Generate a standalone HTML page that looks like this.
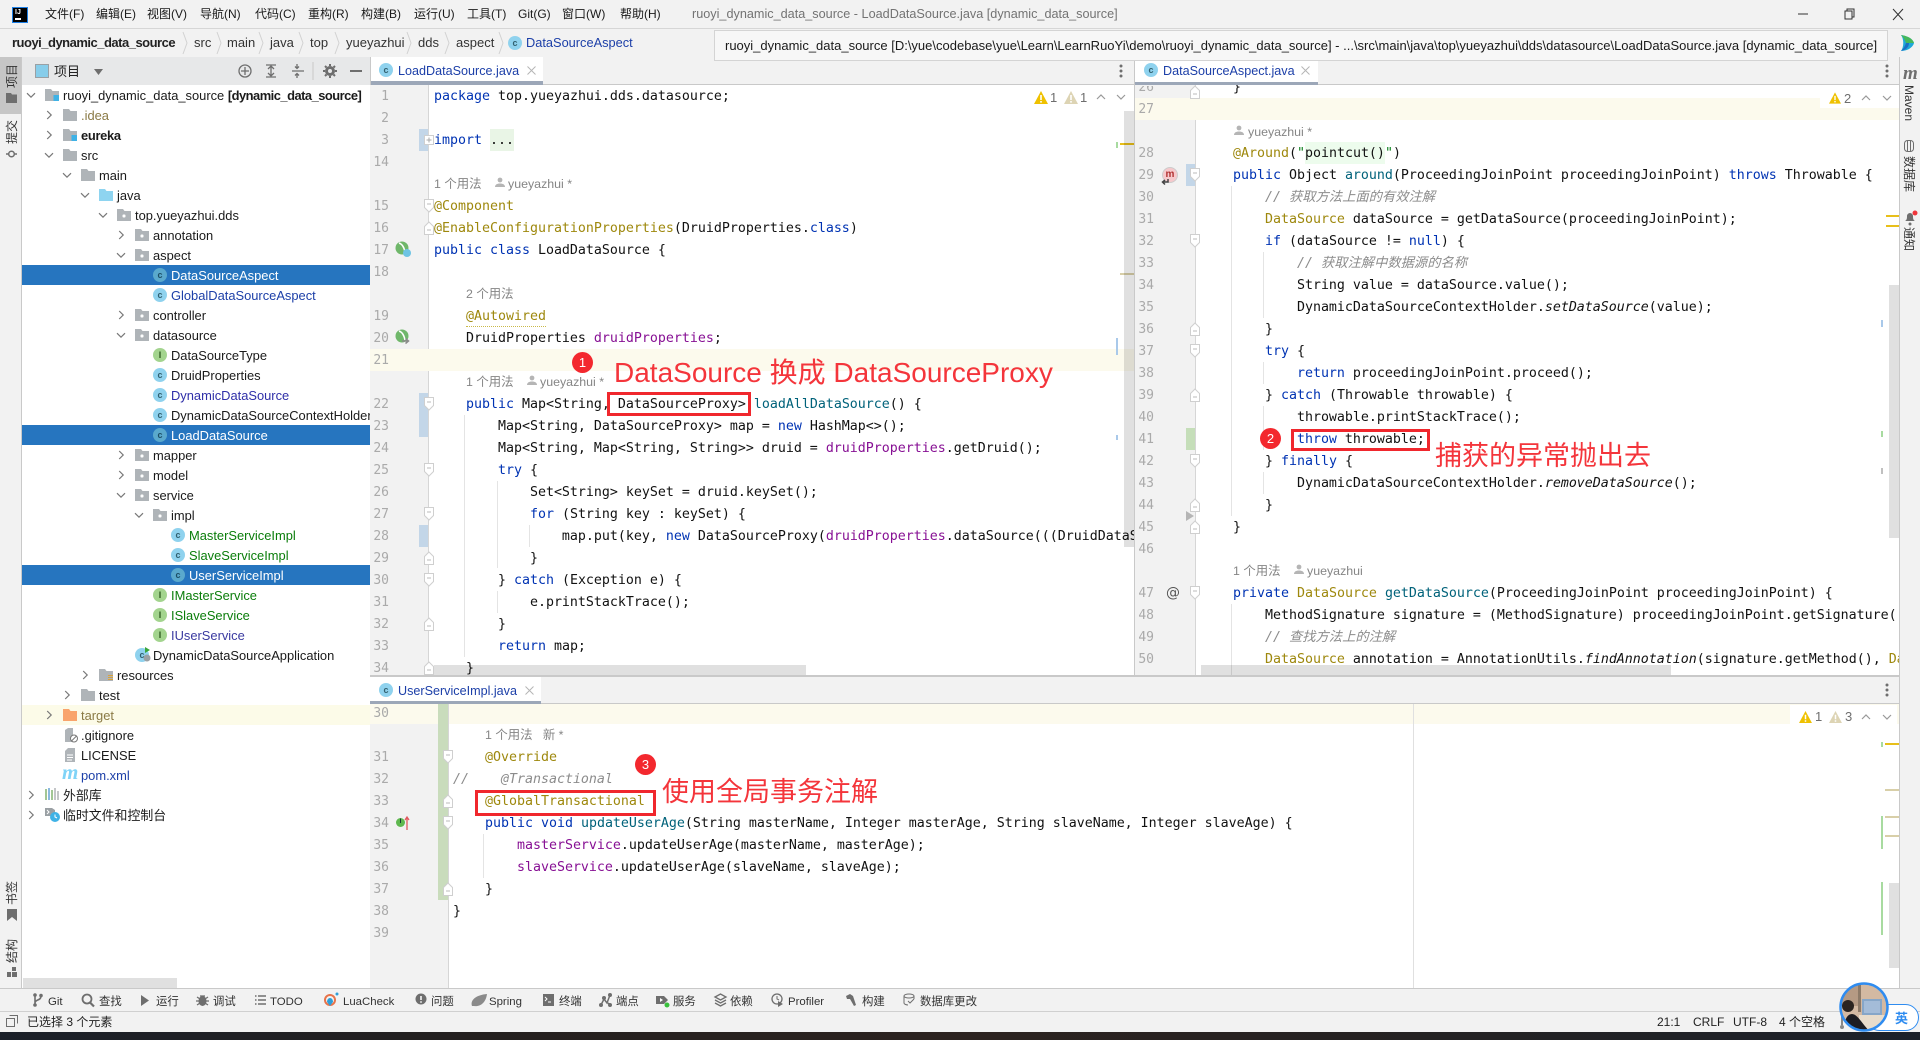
<!DOCTYPE html>
<html lang="zh"><head><meta charset="utf-8"><title>ruoyi_dynamic_data_source</title>
<style>
html,body{margin:0;padding:0}
body{width:1920px;height:1040px;overflow:hidden;background:#f2f2f2;position:relative;font-family:"Liberation Sans","Noto Sans CJK SC",sans-serif;color:#1a1a1a}
.a,.t,.ci,.ii,svg.s,.h,.bx,.l,.rc{position:absolute}
.a,.t,.h{white-space:nowrap}
.b{position:absolute}
.t{font-size:12.9px;line-height:20px;margin-top:1px}
.w{color:#fff}
.ci,.ii{width:14px;height:14px;border-radius:50%;background:#8fd2ee;color:#31606f;font:bold 9px/14px "Liberation Sans",sans-serif;text-align:center}
.ii{background:#a3d48e;color:#2d5a1e}
.sl{background:#5aa9cd;color:#1d4f66}
.m{font-size:12px;line-height:20px;top:4px}
.n{font-size:13px;line-height:20px;top:33px;color:#333}
.tb{font-size:12.6px;line-height:20px;color:#1c3fa8;margin-top:1px}
.bt{font-size:11.4px;line-height:16px;top:993.5px;color:#333}
.st{font-size:12px;line-height:16px;top:1014px;color:#222}
.ed{position:absolute;left:0;top:0;width:1920px;height:1040px;overflow:hidden}
.ed p{position:absolute;margin:1px 0 0;white-space:pre;font:13.29px/22px "DejaVu Sans Mono","Liberation Mono","Noto Sans CJK SC",monospace;height:22px;color:#111}
.ed1 p{left:434px}.ed2 p{left:1201px}.ed3 p{left:453px}
i{font-style:normal}
.k{color:#0033b3}.an{color:#9e880d}.f{color:#871094}.mt{color:#00627a}.str{color:#067d17}
.c{color:#8c8c8c;font-style:italic}.it{font-style:italic}
.l{font:13px/22px "DejaVu Sans Mono","Liberation Mono",monospace;color:#aaa;width:19px;text-align:right;margin-top:1px}
.n1 .l{left:370px}.n2 .l{left:1135px}.n3 .l{left:370px}
.h{font-size:12.4px;line-height:22px;color:#858585}
.gd{position:absolute;width:1px;background:#e4e4e4}
.bx{border:3px solid #f0272d;box-sizing:border-box}
.rc{width:21px;height:21px;border-radius:50%;background:#f3282e;color:#fff;font:13px/21px "Liberation Sans",sans-serif;text-align:center}
.ann{position:absolute;white-space:nowrap;color:#f4353b;font-family:"Liberation Sans","Noto Sans CJK SC",sans-serif}
.v{position:absolute;white-space:nowrap;writing-mode:vertical-rl;text-orientation:sideways;font-size:12px;line-height:14px;color:#333}
.vl{transform:rotate(180deg)}
svg.s{overflow:visible}
.fd{width:10px;height:14px}
.ar{width:10px;height:10px}
.fl{width:14px;height:12px}
.sb{position:absolute;background:rgba(0,0,0,.12)}
.wn{position:absolute;font-size:13px;line-height:16px;color:#6e6e6e}
.bd{font-weight:bold;letter-spacing:-.5px}
</style></head><body>
<svg width="0" height="0" style="position:absolute">
<symbol id="cr" viewBox="0 0 10 10"><path d="M3.2 1l4 4-4 4" fill="none" stroke="#777" stroke-width="1.2"/></symbol>
<symbol id="cd" viewBox="0 0 10 10"><path d="M1 3.2l4 4 4-4" fill="none" stroke="#777" stroke-width="1.2"/></symbol>
<symbol id="fo" viewBox="0 0 14 12"><path d="M0 0h6l1.5 2H14v10H0z" fill="#afb4b8"/></symbol>
<symbol id="pk" viewBox="0 0 14 12"><path d="M0 0h6l1.5 2H14v10H0z" fill="#afb4b8"/><rect x="5.5" y="5.5" width="3" height="3" rx="1" fill="#fff"/></symbol>
<symbol id="fb" viewBox="0 0 14 12"><path d="M0 0h6l1.5 2H14v10H0z" fill="#8ed4f0"/></symbol>
<symbol id="ft" viewBox="0 0 14 12"><path d="M0 0h6l1.5 2H14v10H0z" fill="#f9a46c"/></symbol>
<symbol id="mo" viewBox="0 0 14 12"><path d="M0 0h6l1.5 2H14v10H0z" fill="#afb4b8"/><rect x="8.5" y="6" width="6" height="6.5" fill="#3fb2e6"/></symbol>
<symbol id="rs" viewBox="0 0 14 12"><path d="M0 0h6l1.5 2H14v10H0z" fill="#afb4b8"/><path d="M9 6.5h6M9 8.5h6M9 10.5h6M9 12.5h6" stroke="#d9a33c" stroke-width="1.1"/></symbol>
<symbol id="fdo" viewBox="0 0 10 14"><path d="M.5.5h9v8L5 13 .5 8.500z" fill="#fff" stroke="#cfcfcf"/><path d="M3 5h4" stroke="#bbb"/></symbol>
<symbol id="fde" viewBox="0 0 10 14"><path d="M.5 13.500h9v-8L5 1 .5 5.500z" fill="#fff" stroke="#cfcfcf"/><path d="M3 9h4" stroke="#bbb"/></symbol>
<symbol id="pn" viewBox="0 0 10 12"><circle cx="5" cy="3" r="2.400" fill="#b5b5b5"/><path d="M0 10c0-3 3-3.500 5-3.500s5 .5 5 3.500z" fill="#b5b5b5"/></symbol>
<symbol id="wa" viewBox="0 0 14 13"><path d="M7 0l7 13H0z" fill="#efc100"/><path d="M6.200 4h1.600v5H6.200zM6.200 10h1.600v1.600H6.200z" fill="#fff"/></symbol>
<symbol id="wb" viewBox="0 0 14 13"><path d="M7 0l7 13H0z" fill="#ddd4b4"/><path d="M6.200 4h1.600v5H6.200zM6.200 10h1.600v1.600H6.200z" fill="#fff"/></symbol>
<symbol id="up" viewBox="0 0 10 6"><path d="M1 5l4-4 4 4" fill="none" stroke="#999" stroke-width="1.200"/></symbol>
<symbol id="dn" viewBox="0 0 10 6"><path d="M1 1l4 4 4-4" fill="none" stroke="#999" stroke-width="1.200"/></symbol>
<symbol id="kb" viewBox="0 0 4 14"><circle cx="2" cy="2" r="1.500" fill="#6e6e6e"/><circle cx="2" cy="7" r="1.500" fill="#6e6e6e"/><circle cx="2" cy="12" r="1.500" fill="#6e6e6e"/></symbol>
<symbol id="sep" viewBox="0 0 6 24"><path d="M1 1l4 11-4 11" fill="none" stroke="#d2d2d2"/></symbol>
</svg>

<!-- title bar -->
<div class="b" style="left:0;top:0;width:1920px;height:28px;background:#f2f2f2;border-bottom:1px solid #d6d6d6"></div>
<div class="b" style="left:12px;top:7px;width:16px;height:16px;background:#000;border:1.500px solid #1d7fe6;box-sizing:border-box"></div>
<span class="a" style="left:15px;top:8px;font:bold 7px/9px 'Liberation Sans',sans-serif;color:#fff">IJ</span>
<div class="b" style="left:15px;top:18px;width:6px;height:1.500px;background:#fff"></div>
<span class="a m" style="left:45px">文件(F)</span><span class="a m" style="left:96px">编辑(E)</span><span class="a m" style="left:147px">视图(V)</span><span class="a m" style="left:200px">导航(N)</span><span class="a m" style="left:255px">代码(C)</span><span class="a m" style="left:308px">重构(R)</span><span class="a m" style="left:361px">构建(B)</span><span class="a m" style="left:414px">运行(U)</span><span class="a m" style="left:467px">工具(T)</span><span class="a m" style="left:518px">Git(G)</span><span class="a m" style="left:562px">窗口(W)</span><span class="a m" style="left:620px">帮助(H)</span>
<span class="a" style="left:692px;top:4px;font-size:12.660px;line-height:20px;color:#737373">ruoyi_dynamic_data_source - LoadDataSource.java [dynamic_data_source]</span>
<svg class="s" style="left:1798px;top:8px" width="110" height="14"><path d="M0 6h10" stroke="#333"/><path d="M47 3h7v8h-7zM49 3V1h7v8h-2" fill="none" stroke="#333"/><path d="M95 1l10 11M105 1L95 12" stroke="#333" fill="none"/></svg>

<!-- nav bar -->
<div class="b" style="left:0;top:29px;width:1920px;height:28px;background:#f2f2f2;border-bottom:1px solid #d2d2d2"></div>
<span class="a n bd" style="left:12px;color:#222">ruoyi_dynamic_data_source</span>
<span class="a n" style="left:194px">src</span><span class="a n" style="left:227px">main</span><span class="a n" style="left:270px">java</span><span class="a n" style="left:310px">top</span><span class="a n" style="left:346px">yueyazhui</span><span class="a n" style="left:418px">dds</span><span class="a n" style="left:456px">aspect</span>
<svg class="s" style="left:182px;top:31px" width="6" height="24"><use href="#sep"/></svg><svg class="s" style="left:216px;top:31px" width="6" height="24"><use href="#sep"/></svg><svg class="s" style="left:258px;top:31px" width="6" height="24"><use href="#sep"/></svg><svg class="s" style="left:298px;top:31px" width="6" height="24"><use href="#sep"/></svg><svg class="s" style="left:334px;top:31px" width="6" height="24"><use href="#sep"/></svg><svg class="s" style="left:406px;top:31px" width="6" height="24"><use href="#sep"/></svg><svg class="s" style="left:444px;top:31px" width="6" height="24"><use href="#sep"/></svg><svg class="s" style="left:498px;top:31px" width="6" height="24"><use href="#sep"/></svg>
<span class="ci" style="left:508px;top:36px">c</span>
<span class="a n" style="left:526px;color:#1c3fa8;font-size:12.800px">DataSourceAspect</span>
<svg class="s" style="left:1900px;top:34px" width="15" height="18"><path d="M1 1c7 1 12 4 13 8-1 4-6 8-13 8 3-4 3-12 0-16z" fill="#1ea8d8"/><path d="M1 1c7 1 12 4 13 8H6C5 6 3 3 1 1z" fill="#46b85a"/><path d="M1 17c3-3 4-5 5-8h3c0 4-3 7-8 8z" fill="#1a6fc4"/></svg>

<!-- left stripe -->
<div class="b" style="left:0;top:57px;width:21px;height:931px;background:#f2f2f2;border-right:1px solid #c9c9c9"></div>
<div class="b" style="left:0;top:57px;width:21px;height:57px;background:#c6c6c6"></div>
<span class="v vl" style="left:5px;top:64px">项目</span>
<svg class="s" style="left:6px;top:93px" width="11" height="10"><path d="M0 0h5l1 1.500h5V10H0z" fill="#6e6e6e"/></svg>
<span class="v vl" style="left:5px;top:120px">提交</span>
<svg class="s" style="left:6px;top:149px" width="11" height="10"><circle cx="5.500" cy="5" r="2.800" fill="none" stroke="#6e6e6e" stroke-width="1.500"/><path d="M0 5h2.500M8.500 5H11" stroke="#6e6e6e" stroke-width="1.500"/></svg>
<span class="v vl" style="left:5px;top:881px">书签</span>
<svg class="s" style="left:7px;top:909px" width="10" height="12"><path d="M0 0h10v12L5 8 0 12z" fill="#6e6e6e"/></svg>
<span class="v vl" style="left:5px;top:939px">结构</span>
<svg class="s" style="left:7px;top:967px" width="10" height="10"><path d="M5 0h4v4H5zM0 5h4v5H0zM5 5h5v5H5z" fill="#6e6e6e"/></svg>

<!-- project panel -->
<div class="b" style="left:22px;top:57px;width:348px;height:28px;background:#e7e8e9"></div>
<div class="b" style="left:22px;top:85px;width:348px;height:903px;background:#fff;overflow:hidden"></div>
<svg class="s" style="left:35px;top:64px" width="14" height="14"><rect x=".5" y=".5" width="13" height="13" fill="#87cdea" stroke="#9aa0a4"/></svg>
<span class="a" style="left:54px;top:62px;font-size:13px;line-height:20px;color:#222">项目</span>
<svg class="s" style="left:94px;top:69px" width="9" height="6"><path d="M0 0h9L4.500 6z" fill="#6e6e6e"/></svg>
<svg class="s" style="left:238px;top:64px" width="110" height="14" fill="none" stroke="#6e6e6e" stroke-width="1.300"><circle cx="7" cy="7" r="6"/><path d="M7 3v8M3 7h8"/><path d="M28 1h10M28 13h10M33 3v8M30 5l3-3 3 3M30 9l3 3 3-3"/><path d="M54 7h12M59 0v4.500M59 14V9.500M57 2.500l2 2 2-2M57 11.500l2-2 2 2"/><path d="M75 -2v18" stroke="#d0d0d0"/><circle cx="92" cy="7" r="3.500" stroke-width="3"/><path d="M92 0v2M92 12v2M85 7h2M97 7h2M87 2l1.500 1.500M97 2l-1.500 1.500M87 12l1.500-1.500M97 12l-1.500-1.500" stroke-width="2"/><path d="M112 7h12" stroke-width="2"/></svg>

<!-- selected rows & target -->
<div class="b" style="left:22px;top:265px;width:348px;height:20px;background:#2675bf"></div>
<div class="b" style="left:22px;top:425px;width:348px;height:20px;background:#2675bf"></div>
<div class="b" style="left:22px;top:565px;width:348px;height:20px;background:#2675bf"></div>
<div class="b" style="left:22px;top:705px;width:348px;height:20px;background:#fcfbe8"></div>

<!-- tree arrows -->
<svg class="s ar" style="left:26px;top:90px"><use href="#cd"/></svg>
<svg class="s ar" style="left:44px;top:110px"><use href="#cr"/></svg>
<svg class="s ar" style="left:44px;top:130px"><use href="#cr"/></svg>
<svg class="s ar" style="left:44px;top:150px"><use href="#cd"/></svg>
<svg class="s ar" style="left:62px;top:170px"><use href="#cd"/></svg>
<svg class="s ar" style="left:80px;top:190px"><use href="#cd"/></svg>
<svg class="s ar" style="left:98px;top:210px"><use href="#cd"/></svg>
<svg class="s ar" style="left:116px;top:230px"><use href="#cr"/></svg>
<svg class="s ar" style="left:116px;top:250px"><use href="#cd"/></svg>
<svg class="s ar" style="left:116px;top:310px"><use href="#cr"/></svg>
<svg class="s ar" style="left:116px;top:330px"><use href="#cd"/></svg>
<svg class="s ar" style="left:116px;top:450px"><use href="#cr"/></svg>
<svg class="s ar" style="left:116px;top:470px"><use href="#cr"/></svg>
<svg class="s ar" style="left:116px;top:490px"><use href="#cd"/></svg>
<svg class="s ar" style="left:134px;top:510px"><use href="#cd"/></svg>
<svg class="s ar" style="left:80px;top:670px"><use href="#cr"/></svg>
<svg class="s ar" style="left:62px;top:690px"><use href="#cr"/></svg>
<svg class="s ar" style="left:44px;top:710px"><use href="#cr"/></svg>
<svg class="s ar" style="left:26px;top:790px"><use href="#cr"/></svg>
<svg class="s ar" style="left:26px;top:810px"><use href="#cr"/></svg>

<!-- tree folder icons -->
<svg class="s fl" style="left:45px;top:89px"><use href="#mo"/></svg>
<svg class="s fl" style="left:63px;top:109px"><use href="#fo"/></svg>
<svg class="s fl" style="left:63px;top:129px"><use href="#mo"/></svg>
<svg class="s fl" style="left:63px;top:149px"><use href="#fo"/></svg>
<svg class="s fl" style="left:81px;top:169px"><use href="#fo"/></svg>
<svg class="s fl" style="left:99px;top:189px"><use href="#fb"/></svg>
<svg class="s fl" style="left:117px;top:209px"><use href="#pk"/></svg>
<svg class="s fl" style="left:135px;top:229px"><use href="#pk"/></svg>
<svg class="s fl" style="left:135px;top:249px"><use href="#pk"/></svg>
<svg class="s fl" style="left:135px;top:309px"><use href="#pk"/></svg>
<svg class="s fl" style="left:135px;top:329px"><use href="#pk"/></svg>
<svg class="s fl" style="left:135px;top:449px"><use href="#pk"/></svg>
<svg class="s fl" style="left:135px;top:469px"><use href="#pk"/></svg>
<svg class="s fl" style="left:135px;top:489px"><use href="#pk"/></svg>
<svg class="s fl" style="left:153px;top:509px"><use href="#pk"/></svg>
<svg class="s fl" style="left:99px;top:669px"><use href="#rs"/></svg>
<svg class="s fl" style="left:81px;top:689px"><use href="#fo"/></svg>
<svg class="s fl" style="left:63px;top:709px"><use href="#ft"/></svg>

<!-- class icons -->
<span class="ci sl" style="left:153px;top:268px">c</span>
<span class="ci" style="left:153px;top:288px">c</span>
<span class="ii" style="left:153px;top:348px">I</span>
<span class="ci" style="left:153px;top:368px">c</span>
<span class="ci" style="left:153px;top:388px">c</span>
<span class="ci" style="left:153px;top:408px">c</span>
<span class="ci sl" style="left:153px;top:428px">c</span>
<span class="ci" style="left:171px;top:528px">c</span>
<span class="ci" style="left:171px;top:548px">c</span>
<span class="ci sl" style="left:171px;top:568px">c</span>
<span class="ii" style="left:153px;top:588px">I</span>
<span class="ii" style="left:153px;top:608px">I</span>
<span class="ii" style="left:153px;top:628px">I</span>
<span class="ci" style="left:135px;top:648px">c</span>
<svg class="s" style="left:140px;top:647px" width="12" height="16"><path d="M5 0l5 3-5 3z" fill="#3aa63a"/><circle cx="7" cy="11" r="3.500" fill="#9aa0a4"/></svg>

<!-- tree text -->
<span class="t" style="left:63px;top:85px;width:305px;overflow:hidden">ruoyi_dynamic_data_source <span class="bd">[dynamic_data_source]</span></span>
<span class="t" style="left:81px;top:105px;color:#8a7a45">.idea</span>
<span class="t" style="left:81px;top:125px"><b style="letter-spacing:-.3px">eureka</b></span>
<span class="t" style="left:81px;top:145px">src</span>
<span class="t" style="left:99px;top:165px">main</span>
<span class="t" style="left:117px;top:185px">java</span>
<span class="t" style="left:135px;top:205px">top.yueyazhui.dds</span>
<span class="t" style="left:153px;top:225px">annotation</span>
<span class="t" style="left:153px;top:245px">aspect</span>
<span class="t w" style="left:171px;top:265px">DataSourceAspect</span>
<span class="t" style="left:171px;top:285px;color:#1c3fa8">GlobalDataSourceAspect</span>
<span class="t" style="left:153px;top:305px">controller</span>
<span class="t" style="left:153px;top:325px">datasource</span>
<span class="t" style="left:171px;top:345px">DataSourceType</span>
<span class="t" style="left:171px;top:365px">DruidProperties</span>
<span class="t" style="left:171px;top:385px;color:#2f2fa8">DynamicDataSource</span>
<span class="t" style="left:171px;top:405px;width:199px;overflow:hidden">DynamicDataSourceContextHolder</span>
<span class="t w" style="left:171px;top:425px">LoadDataSource</span>
<span class="t" style="left:153px;top:445px">mapper</span>
<span class="t" style="left:153px;top:465px">model</span>
<span class="t" style="left:153px;top:485px">service</span>
<span class="t" style="left:171px;top:505px">impl</span>
<span class="t" style="left:189px;top:525px;color:#0a7d0a">MasterServiceImpl</span>
<span class="t" style="left:189px;top:545px;color:#0a7d0a">SlaveServiceImpl</span>
<span class="t w" style="left:189px;top:565px">UserServiceImpl</span>
<span class="t" style="left:171px;top:585px;color:#0a7d0a">IMasterService</span>
<span class="t" style="left:171px;top:605px;color:#0a7d0a">ISlaveService</span>
<span class="t" style="left:171px;top:625px;color:#3a3aa0">IUserService</span>
<span class="t" style="left:153px;top:645px">DynamicDataSourceApplication</span>
<span class="t" style="left:117px;top:665px">resources</span>
<span class="t" style="left:99px;top:685px">test</span>
<span class="t" style="left:81px;top:705px;color:#8a7a45">target</span>
<span class="t" style="left:81px;top:725px">.gitignore</span>
<span class="t" style="left:81px;top:745px">LICENSE</span>
<span class="t" style="left:81px;top:765px;color:#1c3fa8">pom.xml</span>
<span class="t" style="left:63px;top:785px">外部库</span>
<span class="t" style="left:63px;top:805px">临时文件和控制台</span>
<svg class="s" style="left:65px;top:728px" width="13" height="15"><path d="M0 2l3-2h5v14H0z" fill="#afb4b8"/><circle cx="9" cy="10.500" r="3.500" fill="#fff" stroke="#777"/><path d="M6.500 13L11.500 8" stroke="#777"/></svg>
<svg class="s" style="left:65px;top:748px" width="10" height="14"><path d="M0 3l3-3h7v14H0z" fill="#afb4b8"/><path d="M2 7h6M2 9.500h6M2 12h5" stroke="#fff"/></svg>
<span class="a" style="left:62px;top:762px;font:italic bold 21px/20px 'Liberation Serif',serif;color:#7fd3f7">m</span>
<svg class="s" style="left:45px;top:788px" width="14" height="12"><path d="M1 1v11" stroke="#8bb87a" stroke-width="1.600"/><path d="M4 0v12" stroke="#6ea8d8" stroke-width="1.600"/><path d="M7 2v10" stroke="#8bb87a" stroke-width="1.600"/><path d="M10 0v12M13 3v9" stroke="#b5b8ba" stroke-width="1.600"/></svg>
<svg class="s" style="left:45px;top:808px" width="16" height="15"><path d="M0 0h7l3 2v6H0z" fill="#9aa0a4"/><path d="M2 2l2 2-2 2" stroke="#fff" fill="none"/><circle cx="10" cy="9" r="5" fill="#3fb2e6"/><path d="M10 6.500V9l2 1" stroke="#fff" fill="none"/></svg>
<div class="sb" style="left:23px;top:978px;width:154px;height:10px"></div>
<div class="b" style="left:370px;top:57px;width:1px;height:931px;background:#c9c9c9"></div>

<!-- Editor 1 -->
<div class="b" style="left:370px;top:85px;width:59px;height:590px;background:#f2f2f2"></div>
<div class="b" style="left:429px;top:85px;width:705px;height:590px;background:#fff"></div>
<div class="b" style="left:428px;top:85px;width:1px;height:590px;background:#d6d6d6"></div>
<div class="b" style="left:370px;top:349px;width:764px;height:22px;background:#fcfaed"></div>
<div class="b" style="left:419px;top:129px;width:9px;height:22px;background:#c3d6e8"></div>
<div class="b" style="left:419px;top:393px;width:9px;height:44px;background:#c3d6e8"></div>
<div class="b" style="left:419px;top:525px;width:9px;height:22px;background:#c3d6e8"></div>
<div class="b" style="left:490px;top:129px;width:24px;height:22px;background:#e9f5e6"></div>
<div class="gd" style="left:464px;top:415px;height:242px"></div><div class="gd" style="left:497px;top:481px;height:87px"></div><div class="gd" style="left:497px;top:591px;height:22px"></div><div class="gd" style="left:529px;top:525px;height:22px"></div>
<div class="b" style="left:466px;top:325px;width:80px;height:1px;border-bottom:1px dotted #c9b94a"></div>
<div class="n1">
<i class="l" style="top:85px">1</i><i class="l" style="top:107px">2</i><i class="l" style="top:129px">3</i><i class="l" style="top:151px">14</i><i class="l" style="top:195px">15</i><i class="l" style="top:217px">16</i><i class="l" style="top:239px">17</i><i class="l" style="top:261px">18</i><i class="l" style="top:305px">19</i><i class="l" style="top:327px">20</i><i class="l" style="top:349px">21</i><i class="l" style="top:393px">22</i><i class="l" style="top:415px">23</i><i class="l" style="top:437px">24</i><i class="l" style="top:459px">25</i><i class="l" style="top:481px">26</i><i class="l" style="top:503px">27</i><i class="l" style="top:525px">28</i><i class="l" style="top:547px">29</i><i class="l" style="top:569px">30</i><i class="l" style="top:591px">31</i><i class="l" style="top:613px">32</i><i class="l" style="top:635px">33</i><i class="l" style="top:657px">34</i>
</div>
<svg class="s" style="left:395px;top:241px" width="17" height="17"><circle cx="7" cy="7" r="6.500" fill="#6fb76a"/><path d="M4 2c3 1 5 4 6 9" stroke="#fff" stroke-width="1.500" fill="none"/><circle cx="12" cy="12" r="4" fill="#6ec4e4"/></svg>
<svg class="s" style="left:395px;top:329px" width="17" height="17"><circle cx="7" cy="7" r="6.500" fill="#6fb76a"/><path d="M4 2c3 1 5 4 6 9" stroke="#fff" stroke-width="1.500" fill="none"/><path d="M7 12h6M10.500 9.500l3 2.500-3 2.500" stroke="#8a8a8a" stroke-width="1.500" fill="none"/></svg>
<svg class="s" style="left:424px;top:135px" width="10" height="10"><rect x=".5" y=".5" width="9" height="9" fill="#fff" stroke="#cfcfcf"/><path d="M2.500 5h5M5 2.500v5" stroke="#aaa"/></svg>
<svg class="s fd" style="left:424px;top:199px"><use href="#fdo"/></svg><svg class="s fd" style="left:424px;top:221px"><use href="#fde"/></svg><svg class="s fd" style="left:424px;top:397px"><use href="#fdo"/></svg><svg class="s fd" style="left:424px;top:463px"><use href="#fdo"/></svg><svg class="s fd" style="left:424px;top:507px"><use href="#fdo"/></svg><svg class="s fd" style="left:424px;top:551px"><use href="#fde"/></svg><svg class="s fd" style="left:424px;top:573px"><use href="#fdo"/></svg><svg class="s fd" style="left:424px;top:617px"><use href="#fde"/></svg><svg class="s fd" style="left:424px;top:661px"><use href="#fde"/></svg>
<div class="ed ed1" style="clip-path:inset(85px 786px 365px 370px)">
<p style="top:85px"><i class="k">package</i> top.yueyazhui.dds.datasource;</p>
<p style="top:129px"><i class="k">import</i> ...</p>
<span class="h" style="left:434px;top:173px">1 个用法</span>
<svg class="s" style="left:495px;top:177px" width="10" height="12"><use href="#pn"/></svg>
<span class="h" style="left:508px;top:173px">yueyazhui *</span>
<p style="top:195px"><i class="an">@Component</i></p>
<p style="top:217px"><i class="an">@EnableConfigurationProperties</i>(DruidProperties.<i class="k">class</i>)</p>
<p style="top:239px"><i class="k">public class</i> LoadDataSource {</p>
<span class="h" style="left:466px;top:283px">2 个用法</span>
<p style="top:305px">    <i class="an">@Autowired</i></p>
<p style="top:327px">    DruidProperties <i class="f">druidProperties</i>;</p>
<span class="h" style="left:466px;top:371px">1 个用法</span>
<svg class="s" style="left:527px;top:375px" width="10" height="12"><use href="#pn"/></svg>
<span class="h" style="left:540px;top:371px">yueyazhui *</span>
<p style="top:393px">    <i class="k">public</i> Map&lt;String, DataSourceProxy&gt; <i class="mt">loadAllDataSource</i>() {</p>
<p style="top:415px">        Map&lt;String, DataSourceProxy&gt; map = <i class="k">new</i> HashMap&lt;&gt;();</p>
<p style="top:437px">        Map&lt;String, Map&lt;String, String&gt;&gt; druid = <i class="f">druidProperties</i>.getDruid();</p>
<p style="top:459px">        <i class="k">try</i> {</p>
<p style="top:481px">            Set&lt;String&gt; keySet = druid.keySet();</p>
<p style="top:503px">            <i class="k">for</i> (String key : keySet) {</p>
<p style="top:525px">                map.put(key, <i class="k">new</i> DataSourceProxy(<i class="f">druidProperties</i>.dataSource(((DruidDataSource) druid.get(key))));</p>
<p style="top:547px">            }</p>
<p style="top:569px">        } <i class="k">catch</i> (Exception e) {</p>
<p style="top:591px">            e.printStackTrace();</p>
<p style="top:613px">        }</p>
<p style="top:635px">        <i class="k">return</i> map;</p>
<p style="top:657px">    }</p>
</div>
<svg class="s" style="left:1034px;top:91px" width="14" height="13"><use href="#wa"/></svg><span class="wn" style="left:1050px;top:90px">1</span>
<svg class="s" style="left:1064px;top:91px" width="14" height="13"><use href="#wb"/></svg><span class="wn" style="left:1080px;top:90px">1</span>
<svg class="s" style="left:1096px;top:94px" width="10" height="6"><use href="#up"/></svg><svg class="s" style="left:1116px;top:94px" width="10" height="6"><use href="#dn"/></svg>
<div class="b" style="left:1120px;top:143px;width:14px;height:2px;background:#e8bf1a"></div>
<div class="b" style="left:1116px;top:142px;width:2px;height:6px;background:#a8dba0"></div>
<div class="b" style="left:1120px;top:273px;width:14px;height:2px;background:#d8cfa8"></div>
<div class="b" style="left:1116px;top:338px;width:1.500px;height:17px;background:#a9c9ea"></div>
<div class="b" style="left:1116px;top:435px;width:1.500px;height:5px;background:#a9c9ea"></div>
<div class="sb" style="left:1124px;top:111px;width:10px;height:436px"></div>
<div class="sb" style="left:434px;top:665px;width:372px;height:10px"></div>
<!-- Editor1 tab bar -->
<div class="b" style="left:371px;top:57px;width:763px;height:27px;background:#f2f2f2;border-bottom:1px solid #c9c9c9"></div>
<div class="b" style="left:371px;top:57px;width:172px;height:24px;background:#fff"></div>
<div class="b" style="left:371px;top:81px;width:172px;height:4px;background:#9ca7b8"></div>
<span class="ci" style="left:379px;top:63px">c</span>
<span class="a tb" style="left:398px;top:60px">LoadDataSource.java</span>
<svg class="s" style="left:527px;top:66px" width="9" height="9"><path d="M.5.500l8 8M8.500.500l-8 8" stroke="#b5b5b5"/></svg>
<svg class="s" style="left:1119px;top:64px" width="4" height="14"><use href="#kb"/></svg>

<!-- Editor 2 -->
<div class="b" style="left:1134px;top:57px;width:1px;height:618px;background:#c9c9c9"></div>
<div class="b" style="left:1135px;top:85px;width:61px;height:590px;background:#f2f2f2"></div>
<div class="b" style="left:1196px;top:85px;width:703px;height:590px;background:#fff"></div>
<div class="b" style="left:1195px;top:85px;width:1px;height:590px;background:#d6d6d6"></div>
<div class="b" style="left:1135px;top:98px;width:764px;height:22px;background:#fcfaed"></div>
<div class="b" style="left:1186px;top:164px;width:9px;height:22px;background:#c3d6e8"></div>
<div class="b" style="left:1186px;top:428px;width:9px;height:22px;background:#c5deb9"></div>
<div class="b" style="left:1305px;top:142px;width:80px;height:22px;background:#edfced"></div>
<div class="gd" style="left:1231px;top:186px;height:330px"></div><div class="gd" style="left:1231px;top:604px;height:71px"></div><div class="gd" style="left:1263px;top:252px;height:66px"></div><div class="gd" style="left:1263px;top:362px;height:22px"></div><div class="gd" style="left:1263px;top:406px;height:44px"></div><div class="gd" style="left:1263px;top:472px;height:22px"></div>
<div class="n2">
<i class="l" style="top:76px;clip-path:inset(9px 0 0 0)">26</i><i class="l" style="top:98px">27</i><i class="l" style="top:142px">28</i><i class="l" style="top:164px">29</i><i class="l" style="top:186px">30</i><i class="l" style="top:208px">31</i><i class="l" style="top:230px">32</i><i class="l" style="top:252px">33</i><i class="l" style="top:274px">34</i><i class="l" style="top:296px">35</i><i class="l" style="top:318px">36</i><i class="l" style="top:340px">37</i><i class="l" style="top:362px">38</i><i class="l" style="top:384px">39</i><i class="l" style="top:406px">40</i><i class="l" style="top:428px">41</i><i class="l" style="top:450px">42</i><i class="l" style="top:472px">43</i><i class="l" style="top:494px">44</i><i class="l" style="top:516px">45</i><i class="l" style="top:538px">46</i><i class="l" style="top:582px">47</i><i class="l" style="top:604px">48</i><i class="l" style="top:626px">49</i><i class="l" style="top:648px">50</i>
</div>
<span class="a" style="left:1162px;top:167px;width:16px;height:16px;border-radius:50%;background:#f6c9cc;border:1px solid #ccc;box-sizing:border-box;color:#b03030;font:bold 10px/14px 'Liberation Sans',sans-serif;text-align:center">m</span>
<svg class="s" style="left:1161px;top:178px" width="8" height="8"><path d="M7 1v3H2M4 2L1.500 4 4 6.500" stroke="#444" stroke-width="1.500" fill="none"/></svg>
<span class="a" style="left:1166px;top:584px;font:14px/18px 'DejaVu Sans',sans-serif;color:#555">@</span>
<svg class="s" style="left:1186px;top:511px" width="8" height="10"><path d="M0 0l8 5-8 5z" fill="#b5b5b5"/></svg>
<svg class="s fd" style="left:1190px;top:85px"><use href="#fde"/></svg><svg class="s fd" style="left:1190px;top:168px"><use href="#fdo"/></svg><svg class="s fd" style="left:1190px;top:234px"><use href="#fdo"/></svg><svg class="s fd" style="left:1190px;top:322px"><use href="#fde"/></svg><svg class="s fd" style="left:1190px;top:344px"><use href="#fdo"/></svg><svg class="s fd" style="left:1190px;top:388px"><use href="#fde"/></svg><svg class="s fd" style="left:1190px;top:454px"><use href="#fdo"/></svg><svg class="s fd" style="left:1190px;top:498px"><use href="#fde"/></svg><svg class="s fd" style="left:1190px;top:520px"><use href="#fde"/></svg><svg class="s fd" style="left:1190px;top:586px"><use href="#fdo"/></svg>
<div class="ed ed2" style="clip-path:inset(85px 21px 365px 1196px)">
<p style="top:76px">    }</p>
<svg class="s" style="left:1234px;top:125px" width="10" height="12"><use href="#pn"/></svg>
<span class="h" style="left:1248px;top:121px">yueyazhui *</span>
<p style="top:142px">    <i class="an">@Around</i>(<i class="str">"</i>pointcut()<i class="str">"</i>)</p>
<p style="top:164px">    <i class="k">public</i> Object <i class="mt">around</i>(ProceedingJoinPoint proceedingJoinPoint) <i class="k">throws</i> Throwable {</p>
<p style="top:186px">        <i class="c">// 获取方法上面的有效注解</i></p>
<p style="top:208px">        <i class="an">DataSource</i> dataSource = getDataSource(proceedingJoinPoint);</p>
<p style="top:230px">        <i class="k">if</i> (dataSource != <i class="k">null</i>) {</p>
<p style="top:252px">            <i class="c">// 获取注解中数据源的名称</i></p>
<p style="top:274px">            String value = dataSource.value();</p>
<p style="top:296px">            DynamicDataSourceContextHolder.<i class="it">setDataSource</i>(value);</p>
<p style="top:318px">        }</p>
<p style="top:340px">        <i class="k">try</i> {</p>
<p style="top:362px">            <i class="k">return</i> proceedingJoinPoint.proceed();</p>
<p style="top:384px">        } <i class="k">catch</i> (Throwable throwable) {</p>
<p style="top:406px">            throwable.printStackTrace();</p>
<p style="top:428px">            <i class="k">throw</i> throwable;</p>
<p style="top:450px">        } <i class="k">finally</i> {</p>
<p style="top:472px">            DynamicDataSourceContextHolder.<i class="it">removeDataSource</i>();</p>
<p style="top:494px">        }</p>
<p style="top:516px">    }</p>
<span class="h" style="left:1233px;top:560px">1 个用法</span>
<svg class="s" style="left:1294px;top:564px" width="10" height="12"><use href="#pn"/></svg>
<span class="h" style="left:1307px;top:560px">yueyazhui</span>
<p style="top:582px">    <i class="k">private</i> <i class="an">DataSource</i> <i class="mt">getDataSource</i>(ProceedingJoinPoint proceedingJoinPoint) {</p>
<p style="top:604px">        MethodSignature signature = (MethodSignature) proceedingJoinPoint.getSignature(</p>
<p style="top:626px">        <i class="c">// 查找方法上的注解</i></p>
<p style="top:648px">        <i class="an">DataSource</i> annotation = AnnotationUtils.<i class="it">findAnnotation</i>(signature.getMethod(), <i class="an">Da</i></p>
</div>
<div class="b" style="left:1820px;top:85px;width:79px;height:23px;background:#fff"></div>
<svg class="s" style="left:1829px;top:92px" width="12" height="12"><use href="#wa"/></svg><span class="wn" style="left:1844px;top:91px">2</span>
<svg class="s" style="left:1861px;top:95px" width="10" height="6"><use href="#up"/></svg><svg class="s" style="left:1882px;top:95px" width="10" height="6"><use href="#dn"/></svg>
<div class="b" style="left:1886px;top:215px;width:13px;height:2px;background:#e8bf1a"></div>
<div class="b" style="left:1886px;top:225px;width:13px;height:2px;background:#e8bf1a"></div>
<div class="b" style="left:1881px;top:320px;width:2px;height:7px;background:#a9c9ea"></div>
<div class="b" style="left:1881px;top:431px;width:2px;height:6px;background:#a8dba0"></div>
<div class="b" style="left:1881px;top:468px;width:2px;height:6px;background:#c0c0c0"></div>
<div class="sb" style="left:1889px;top:285px;width:10px;height:253px"></div>
<div class="sb" style="left:1201px;top:665px;width:470px;height:10px"></div>
<!-- Editor2 tab bar -->
<div class="b" style="left:1135px;top:57px;width:764px;height:27px;background:#f2f2f2;border-bottom:1px solid #c9c9c9"></div>
<div class="b" style="left:1135px;top:57px;width:183px;height:25px;background:#fff"></div>
<div class="b" style="left:1135px;top:82px;width:183px;height:3px;background:#9ca7b8"></div>
<span class="ci" style="left:1144px;top:63px">c</span>
<span class="a tb" style="left:1163px;top:60px">DataSourceAspect.java</span>
<svg class="s" style="left:1301px;top:66px" width="9" height="9"><path d="M.5.500l8 8M8.500.500l-8 8" stroke="#b5b5b5"/></svg>
<svg class="s" style="left:1885px;top:64px" width="4" height="14"><use href="#kb"/></svg>

<!-- Splitter -->
<div class="b" style="left:370px;top:675px;width:1529px;height:2px;background:#c9c9c9"></div>

<!-- Editor 3 -->
<div class="b" style="left:370px;top:702px;width:78px;height:286px;background:#f2f2f2"></div>
<div class="b" style="left:448px;top:702px;width:1451px;height:286px;background:#fff"></div>
<div class="b" style="left:370px;top:702px;width:1529px;height:22px;background:#fcfaed"></div>
<div class="b" style="left:438px;top:704px;width:10px;height:196px;background:#c9dcbc"></div>
<div class="b" style="left:448px;top:702px;width:1px;height:286px;background:#d6d6d6"></div>
<div class="b" style="left:1413px;top:702px;width:1px;height:286px;background:#e0e0e0"></div>
<div class="gd" style="left:483px;top:834px;height:44px"></div>
<div class="n3">
<i class="l" style="top:702px">30</i><i class="l" style="top:746px">31</i><i class="l" style="top:768px">32</i><i class="l" style="top:790px">33</i><i class="l" style="top:812px">34</i><i class="l" style="top:834px">35</i><i class="l" style="top:856px">36</i><i class="l" style="top:878px">37</i><i class="l" style="top:900px">38</i><i class="l" style="top:922px">39</i>
</div>
<span class="ii" style="left:396px;top:818px;width:9px;height:9px;font:bold 6px/9px 'Liberation Sans',sans-serif;background:#5fb84f;color:#123">I</span>
<svg class="s" style="left:404px;top:816px" width="6" height="14"><path d="M3 14V2M1 4l2-3 2 3" stroke="#e0595e" stroke-width="1.300" fill="none"/></svg>
<svg class="s fd" style="left:443px;top:750px"><use href="#fdo"/></svg><svg class="s fd" style="left:443px;top:794px"><use href="#fde"/></svg><svg class="s fd" style="left:443px;top:816px"><use href="#fdo"/></svg><svg class="s fd" style="left:443px;top:882px"><use href="#fde"/></svg>
<div class="ed ed3">
<span class="h" style="left:485px;top:724px">1 个用法&nbsp;&nbsp;&nbsp;新 *</span>
<p style="top:746px">    <i class="an">@Override</i></p>
<p style="top:768px"><i class="c">//    @Transactional</i></p>
<p style="top:790px">    <i class="an">@GlobalTransactional</i></p>
<p style="top:812px">    <i class="k">public void</i> <i class="mt">updateUserAge</i>(String masterName, Integer masterAge, String slaveName, Integer slaveAge) {</p>
<p style="top:834px">        <i class="f">masterService</i>.updateUserAge(masterName, masterAge);</p>
<p style="top:856px">        <i class="f">slaveService</i>.updateUserAge(slaveName, slaveAge);</p>
<p style="top:878px">    }</p>
<p style="top:900px">}</p>
</div>
<div class="b" style="left:1790px;top:705px;width:107px;height:19px;background:#fff"></div>
<svg class="s" style="left:1799px;top:711px" width="13" height="12"><use href="#wa"/></svg><span class="wn" style="left:1815px;top:709px">1</span>
<svg class="s" style="left:1829px;top:711px" width="13" height="12"><use href="#wb"/></svg><span class="wn" style="left:1845px;top:709px">3</span>
<svg class="s" style="left:1861px;top:714px" width="10" height="6"><use href="#up"/></svg><svg class="s" style="left:1882px;top:714px" width="10" height="6"><use href="#dn"/></svg>
<div class="b" style="left:1885px;top:743px;width:14px;height:2px;background:#e8bf1a"></div>
<div class="b" style="left:1881px;top:742px;width:2px;height:5px;background:#a8dba0"></div>
<div class="b" style="left:1885px;top:789px;width:14px;height:2px;background:#d8cfa8"></div>
<div class="b" style="left:1885px;top:816px;width:14px;height:2px;background:#d8cfa8"></div>
<div class="b" style="left:1885px;top:835px;width:14px;height:2px;background:#d8cfa8"></div>
<div class="b" style="left:1881px;top:816px;width:2px;height:33px;background:#a8dba0"></div>
<div class="b" style="left:1881px;top:882px;width:2px;height:53px;background:#a8dba0"></div>
<div class="sb" style="left:1889px;top:883px;width:10px;height:85px"></div>
<!-- Editor3 tab bar -->
<div class="b" style="left:370px;top:677px;width:1529px;height:26px;background:#f2f2f2;border-bottom:1px solid #c9c9c9"></div>
<div class="b" style="left:370px;top:677px;width:171px;height:24px;background:#fff"></div>
<div class="b" style="left:370px;top:701px;width:171px;height:3px;background:#9ca7b8"></div>
<span class="ci" style="left:379px;top:683px">c</span>
<span class="a tb" style="left:398px;top:680px">UserServiceImpl.java</span>
<svg class="s" style="left:525px;top:686px" width="9" height="9"><path d="M.5.500l8 8M8.500.500l-8 8" stroke="#b5b5b5"/></svg>
<svg class="s" style="left:1885px;top:683px" width="4" height="14"><use href="#kb"/></svg>

<!-- right stripe -->
<div class="b" style="left:1899px;top:57px;width:21px;height:931px;background:#f2f2f2;border-left:1px solid #c9c9c9;box-sizing:border-box"></div>
<span class="a" style="left:1903px;top:64px;font:italic bold 19px/20px 'Liberation Serif',serif;color:#6e6e6e">m</span>
<span class="v" style="left:1902px;top:85px">Maven</span>
<svg class="s" style="left:1904px;top:140px" width="10" height="12"><rect x=".5" y=".5" width="9" height="11" rx="3" fill="none" stroke="#6e6e6e"/><path d="M3.500 1v10M6.500 1v10" stroke="#6e6e6e"/></svg>
<span class="v" style="left:1902px;top:156px">数据库</span>
<svg class="s" style="left:1904px;top:210px" width="14" height="16"><path d="M1 11c2-1 2-3 2-5s2-3 3-3 3 1 3 3 0 4 2 5z" fill="#6e6e6e"/><circle cx="6" cy="14" r="1.500" fill="#6e6e6e"/><circle cx="11" cy="3" r="2.500" fill="#f0353b"/></svg>
<span class="v" style="left:1902px;top:227px">通知</span>

<!-- tooltip -->
<div class="b" style="left:714px;top:30px;width:1174px;height:31px;background:#f7f7f7;border:1px solid #d4d4d4;box-sizing:border-box"></div>
<span class="a" style="left:725px;top:36px;font-size:13px;line-height:20px;color:#1a1a1a">ruoyi_dynamic_data_source [D:\yue\codebase\yue\Learn\LearnRuoYi\demo\ruoyi_dynamic_data_source] - ...\src\main\java\top\yueyazhui\dds\datasource\LoadDataSource.java [dynamic_data_source]</span>

<!-- annotations -->
<div class="bx" style="left:607px;top:392px;width:144px;height:24px"></div>
<div class="rc" style="left:572px;top:352px">1</div>
<span class="ann" style="left:614px;top:356px;font-size:28px;line-height:34px">DataSource 换成 DataSourceProxy</span>
<div class="bx" style="left:1291px;top:429px;width:139px;height:22px"></div>
<div class="rc" style="left:1260px;top:428px">2</div>
<span class="ann" style="left:1435px;top:439px;font-size:27px;line-height:34px">捕获的异常抛出去</span>
<div class="bx" style="left:475px;top:790px;width:181px;height:26px"></div>
<div class="rc" style="left:635px;top:754px">3</div>
<span class="ann" style="left:662px;top:775px;font-size:27px;line-height:34px">使用全局事务注解</span>

<!-- tool bar -->
<div class="b" style="left:0;top:988px;width:1920px;height:1px;background:#c9c9c9"></div>
<div class="b" style="left:0;top:1011px;width:1920px;height:1px;background:#d0d0d0"></div>
<svg class="s" style="left:32px;top:993px" width="980" height="15" fill="#6e6e6e" stroke="none">
<path d="M3 1v12M3 10c0-4 6-2 6-7" stroke="#6e6e6e" stroke-width="1.600" fill="none"/><circle cx="9" cy="2.500" r="1.800"/><circle cx="3" cy="2" r="1.800"/><circle cx="3" cy="12" r="1.800"/>
<circle cx="55" cy="6" r="4.500" fill="none" stroke="#6e6e6e" stroke-width="1.800"/><path d="M58 9.500l4 4" stroke="#6e6e6e" stroke-width="2.200"/>
<path d="M109 2l8 5.500-8 5.500z"/>
<ellipse cx="170.500" cy="8" rx="4" ry="5"/><path d="M165 4l3 2M176 4l-3 2M164 8h3M177 8h-3M165 12l3-2M176 12l-3-2M168 3h5" stroke="#6e6e6e" stroke-width="1.200"/>
<path d="M226 3h8M226 7h8M226 11h8M223 3h1.500M223 7h1.500M223 11h1.500" stroke="#6e6e6e" stroke-width="1.500"/>
<circle cx="298" cy="7" r="5" fill="none" stroke="#e8734a" stroke-width="2"/><path d="M298 5c2 0 3 2 3 4l-3 4-3-4c0-2 1-4 3-4z" fill="#2f9fd8"/><circle cx="305" cy="1" r="1.500" fill="#2f9fd8"/>
<circle cx="389" cy="6" r="5.500"/><path d="M389 3v4M389 8.200v1.500" stroke="#fff" stroke-width="1.500"/>
<path d="M440 13c-2-6 4-11 15-12-1 8-6 13-13 12z" fill="#8a8a8a"/>
<rect x="511" y="1" width="11" height="12"/><path d="M513 4l2 2-2 2M516 9h3" stroke="#fff" fill="none"/>
<path d="M569 12l3-6 3 4 3-8M576 10l3 2" stroke="#6e6e6e" stroke-width="1.500" fill="none"/><circle cx="569" cy="12" r="2"/><circle cx="572" cy="5" r="2"/><circle cx="578" cy="2" r="2"/><circle cx="578" cy="12" r="2"/>
<path d="M624 3h8l4 4-4 4h-8z" stroke="none"/><path d="M628 5l3 2-3 2z" fill="#fff"/><circle cx="635" cy="12" r="2.500" fill="#39c03c"/>
<path d="M683 4l5.500-3 5.500 3-5.500 3zM683 7l5.500 3 5.500-3M683 10l5.500 3 5.500-3" stroke="#6e6e6e" fill="none" stroke-width="1.300"/>
<circle cx="745" cy="6" r="5" fill="none" stroke="#6e6e6e" stroke-width="1.300"/><path d="M745 3v3l2 1" stroke="#6e6e6e" fill="none"/><path d="M746 8l5 3-5 3z"/>
<path d="M814 3l4-2 3 2 3 9-2 1-4-7-3 0z"/>
<ellipse cx="877" cy="3" rx="5" ry="2" fill="none" stroke="#6e6e6e"/><path d="M872 3v7c0 1 2 2 4 2M882 3v3" stroke="#6e6e6e" fill="none"/><path d="M876 8l2 2 4-4" stroke="#6e6e6e" fill="none"/>
</svg>
<span class="a bt" style="left:48px">Git</span><span class="a bt" style="left:99px">查找</span><span class="a bt" style="left:156px">运行</span><span class="a bt" style="left:213px">调试</span><span class="a bt" style="left:270px">TODO</span><span class="a bt" style="left:343px">LuaCheck</span><span class="a bt" style="left:431px">问题</span><span class="a bt" style="left:489px">Spring</span><span class="a bt" style="left:559px">终端</span><span class="a bt" style="left:616px">端点</span><span class="a bt" style="left:673px">服务</span><span class="a bt" style="left:730px">依赖</span><span class="a bt" style="left:788px">Profiler</span><span class="a bt" style="left:862px">构建</span><span class="a bt" style="left:920px">数据库更改</span>

<!-- status bar -->
<svg class="s" style="left:6px;top:1015px" width="12" height="12"><path d="M3.500.500h8v8M.5 3.500h8v8h-8z" fill="none" stroke="#6e6e6e"/></svg>
<span class="a st" style="left:27px">已选择 3 个元素</span>
<span class="a st" style="left:1657px">21:1</span><span class="a st" style="left:1693px">CRLF</span><span class="a st" style="left:1733px">UTF-8</span><span class="a st" style="left:1779px">4 个空格</span>
<svg class="s" style="left:1839px;top:1012px" width="6" height="18"><path d="M3 1v12" stroke="#888" stroke-width="2"/><circle cx="3" cy="15" r="2" fill="#888"/></svg>

<!-- taskbar -->
<div class="b" style="left:0;top:1032px;width:1920px;height:8px;background:linear-gradient(90deg,#1b2029 0,#24201f 25%,#2c2320 50%,#262222 70%,#1c212a 100%)"></div>

<!-- IME / avatar -->
<div class="b" style="left:1866px;top:1004px;width:53px;height:27px;background:#fff;border:1px solid #2f8cf0;border-radius:14px;box-sizing:border-box"></div>
<span class="a" style="left:1895px;top:1010px;font-size:13px;line-height:18px;font-weight:bold;color:#2f8cf0">英</span>
<svg class="s" style="left:1839px;top:982px" width="50" height="50" viewBox="0 0 50 50"><defs><clipPath id="av"><circle cx="25" cy="25" r="23.500"/></clipPath></defs><g clip-path="url(#av)"><rect width="50" height="50" fill="#d3b9a2"/><rect x="0" y="0" width="20" height="24" fill="#b59a84"/><rect x="19" y="0" width="3" height="30" fill="#8d7a68"/><rect x="23" y="17" width="20" height="16" fill="#86a6c8"/><rect x="25" y="19" width="16" height="12" fill="#a4bcd8"/><rect x="20" y="33" width="30" height="17" fill="#e8dccb"/><circle cx="9" cy="24" r="6" fill="#2b2420"/><path d="M5 50c0-12 3-18 8-18s9 8 18 18z" fill="#1d1d22"/></g><circle cx="25" cy="25" r="23.500" fill="none" stroke="#2f8cf0" stroke-width="2.500"/></svg>
</body></html>
